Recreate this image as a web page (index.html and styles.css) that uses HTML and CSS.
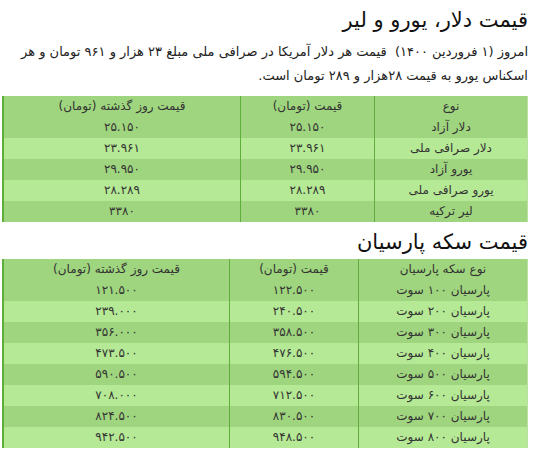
FILE: index.html
```html
<!DOCTYPE html>
<html lang="fa" dir="rtl">
<head>
<meta charset="utf-8">
<link rel="stylesheet" href="styles.css">
</head>
<body>
<div class="page">
  <h2 class="title">قیمت دلار، یورو و لیر</h2>
  <p class="lead">امروز (۱ فروردین ۱۴۰۰)&nbsp; قیمت هر دلار آمریکا در صرافی ملی مبلغ ۲۳ هزار و ۹۶۱ تومان و هر اسکناس یورو به قیمت ۲۸هزار و ۲۸۹ تومان است.</p>
  <table class="grid grid-a">
    <tr class="head"><td class="c1">نوع</td><td class="c2">قیمت (تومان)</td><td class="c3">قیمت روز گذشته (تومان)</td></tr>
    <tr><td>دلار آزاد</td><td>۲۵.۱۵۰</td><td>۲۵.۱۵۰</td></tr>
    <tr><td>دلار صرافی ملی</td><td>۲۳.۹۶۱</td><td>۲۳.۹۶۱</td></tr>
    <tr><td>یورو آزاد</td><td>۲۹.۹۵۰</td><td>۲۹.۹۵۰</td></tr>
    <tr><td>یورو صرافی ملی</td><td>۲۸.۲۸۹</td><td>۲۸.۲۸۹</td></tr>
    <tr><td>لیر ترکیه</td><td>۳۳۸۰</td><td>۳۳۸۰</td></tr>
  </table>
  <h2 class="title title-b">قیمت سکه پارسیان</h2>
  <table class="grid grid-b">
    <tr class="head"><td class="c1">نوع سکه پارسیان</td><td class="c2">قیمت (تومان)</td><td class="c3">قیمت روز گذشته (تومان)</td></tr>
    <tr><td>پارسیان ۱۰۰ سوت</td><td>۱۲۲.۵۰۰</td><td>۱۲۱.۵۰۰</td></tr>
    <tr><td>پارسیان ۲۰۰ سوت</td><td>۲۴۰.۵۰۰</td><td>۲۳۹.۰۰۰</td></tr>
    <tr><td>پارسیان ۳۰۰ سوت</td><td>۳۵۸.۵۰۰</td><td>۳۵۶.۰۰۰</td></tr>
    <tr><td>پارسیان ۴۰۰ سوت</td><td>۴۷۶.۵۰۰</td><td>۴۷۳.۵۰۰</td></tr>
    <tr><td>پارسیان ۵۰۰ سوت</td><td>۵۹۴.۵۰۰</td><td>۵۹۰.۵۰۰</td></tr>
    <tr><td>پارسیان ۶۰۰ سوت</td><td>۷۱۲.۵۰۰</td><td>۷۰۸.۰۰۰</td></tr>
    <tr><td>پارسیان ۷۰۰ سوت</td><td>۸۳۰.۵۰۰</td><td>۸۲۴.۵۰۰</td></tr>
    <tr><td>پارسیان ۸۰۰ سوت</td><td>۹۴۸.۵۰۰</td><td>۹۴۲.۵۰۰</td></tr>
  </table>
</div>
</body>
</html>
```
FILE: styles.css
```css
html, body {
  margin: 0;
  padding: 0;
  background: #ffffff;
}
.page {
  padding: 0 5px 0 2px;
  font-family: "DejaVu Sans", "Noto Sans", sans-serif;
  color: #222222;
}
.title {
  margin: 0;
  padding-top: 3px;
  font-size: 21px;
  font-weight: normal;
  line-height: 34px;
  color: #111111;
}
.title-b {
  padding-top: 4px;
  line-height: 33px;
}
.lead {
  margin: 3px 0 8px 0;
  padding-left: 3px;
  font-size: 13px;
  line-height: 24px;
  color: #222222;
}
.grid {
  width: 100%;
  border-collapse: collapse;
  font-size: 12px;
  color: #333333;
  border-right: 1px solid #b8e0a0;
  border-left: 2px solid #5fae3b;
}
.grid td {
  height: 21px;
  padding: 0;
  text-align: center;
  line-height: 21px;
  background: #b5e995;
}
.grid tr:nth-child(even) td {
  background: #9fd57e;
}
.grid .head td {
  background: #9fd57e;
}
.grid td:nth-child(1) {
  border-left: 1px solid #5fae3b;
}
.grid td:nth-child(2) {
  border-left: 1px solid #5fae3b;
}
.grid-a .c1 { width: 152px; }
.grid-a .c2 { width: 133px; }
.grid-b .c1 { width: 168px; }
.grid-b .c2 { width: 128px; }
```
